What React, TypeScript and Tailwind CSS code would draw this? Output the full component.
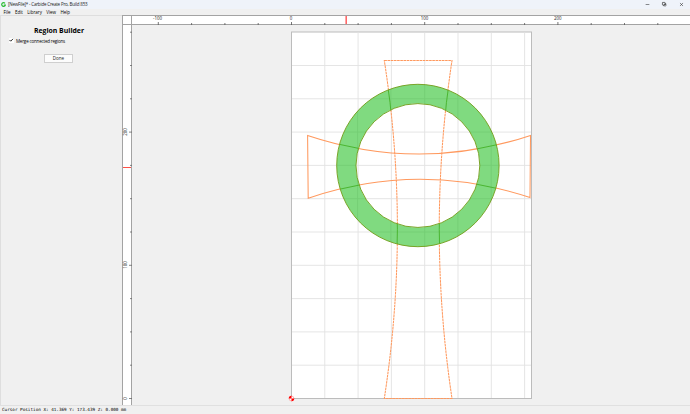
import { Check, Copy, Minus, X } from "lucide-react";

const GRID = 33.3;
const ORIGIN_X = 159.5;
const ORIGIN_Y = 373.5;

const UPRIGHT = "M252.3 35.5H320Q294.5 204 320 373.5H252.3Q278.5 204 252.3 35.5Z";
const CROSSBAR =
  "M175.6 110.4Q287 147.6 398.5 110.4L398 172.5Q287 135.8 176.2 173.2Z";
const RING =
  "M204.7 140.5a81.2 81.2 0 1 0 162.4 0a81.2 81.2 0 1 0 -162.4 0ZM224 140.5a61.9 61.9 0 1 0 123.8 0a61.9 61.9 0 1 0 -123.8 0Z";

const menus = ["File", "Edit", "Library", "View", "Help"];

function TitleBar() {
  return (
    <header className="flex h-[9px] shrink-0 items-center justify-between bg-[#eff3fa]">
      <div className="flex items-center pl-[1px]">
        <svg className="h-[5px] w-[5px]" viewBox="0 0 10 10">
          <path
            d="M8 2.6A3.7 3.7 0 1 0 8.7 6H5.6"
            fill="none"
            stroke="#2fbd38"
            strokeWidth="2.4"
          />
        </svg>
        <span className="ml-[2px] whitespace-pre text-[4.5px] leading-[9px] tracking-[-0.19px]">
          [NewFile]* - Carbide Create Pro, Build 853
        </span>
      </div>
      <div className="flex items-center gap-[12px] pr-[6.5px] text-[#222]">
        <Minus size={5} strokeWidth={2.5} />
        <Copy size={4.5} strokeWidth={3.5} className="-scale-x-100 rotate-90" />
        <X size={5} strokeWidth={2.5} />
      </div>
    </header>
  );
}

function MenuBar() {
  return (
    <nav className="flex h-[6px] shrink-0 items-center gap-[4.3px] pl-[3.5px] text-[4.5px] leading-[6px] text-black">
      {menus.map((menu) => (
        <span key={menu}>
          <span className="underline decoration-[0.4px] underline-offset-[0.5px]">
            {menu[0]}
          </span>
          {menu.slice(1)}
        </span>
      ))}
    </nav>
  );
}

function Sidebar() {
  return (
    <aside className="flex w-[122px] shrink-0 flex-col border-l border-t border-[#dedede]">
      <h1 className="mt-[9.5px] pr-[5px] text-center text-[6.9px] font-bold leading-[9px] text-black">
        Region Builder
      </h1>
      <label className="ml-[8px] mt-[3px] flex h-[6px] items-center">
        <span className="flex h-[5px] w-[5px] items-center justify-center bg-white">
          <Check size={4.5} strokeWidth={4.5} className="text-black" />
        </span>
        <span className="ml-[2px] whitespace-nowrap text-[4.5px] leading-[6px] tracking-[-0.18px] text-black">
          Merge connected regions
        </span>
      </label>
      <button className="ml-[43px] mt-[10px] h-[9px] w-[29px] border border-[#cfcfcf] bg-[#fcfcfc] text-center text-[4.5px] leading-[7px]">
        Done
      </button>
    </aside>
  );
}

function TopRuler() {
  return (
    <svg className="block h-[10px] w-[568px]" viewBox="0 0 568 10">
      <rect width="568" height="10" fill="#fff" />
      <path d="M0 .5H568M0 9.5H568M.5 0V10M9.5 0V10" stroke="#a3a3a3" />
      {Array.from({ length: 17 }, (_, i) => {
        const x = 169.5 + (i - 4) * GRID;
        return x > 10 && x < 568 ? (
          <path
            key={i}
            d={`M${x} ${i % 4 === 0 ? 7 : 8}V10`}
            stroke="#555"
            strokeWidth=".8"
          />
        ) : null;
      })}
      <g fontSize="4.4" textAnchor="middle" fill="#222">
        <text x="35.5" y="5.2">-100</text>
        <text x="169" y="5.2">0</text>
        <text x="302.5" y="5.2">100</text>
        <text x="435.7" y="5.2">200</text>
      </g>
      <path d="M224.2 1V9" stroke="#ff6868" strokeWidth="1.6" />
    </svg>
  );
}

function LeftRuler() {
  return (
    <svg className="block h-[380px] w-[10px] shrink-0" viewBox="0 0 10 380">
      <rect width="10" height="380" fill="#fff" />
      <path d="M.5 0V380M9.5 0V380" stroke="#a3a3a3" />
      {Array.from({ length: 12 }, (_, i) => (
        <path
          key={i}
          d={`M${i % 4 === 0 ? 7 : 8} ${ORIGIN_Y - i * GRID}H10`}
          stroke="#666"
          strokeWidth=".8"
        />
      ))}
      <g fontSize="4.4" textAnchor="middle" fill="#222">
        <text transform="translate(5.2 373.5) rotate(-90)">0</text>
        <text transform="translate(5.2 240) rotate(-90)">100</text>
        <text transform="translate(5.2 107) rotate(-90)">200</text>
      </g>
      <path d="M1 142.5H9" stroke="#ff5046" />
    </svg>
  );
}

function Canvas() {
  return (
    <svg className="block h-[380px] w-[558px]" viewBox="0 0 558 380">
      <clipPath id="ring">
        <path d={RING} clipRule="evenodd" />
      </clipPath>
      <rect
        x="159.5"
        y="7"
        width="240"
        height="366.5"
        fill="#fff"
        stroke="#bcbcbc"
      />
      <g stroke="#e2e2e2" strokeWidth=".9">
        {Array.from({ length: 7 }, (_, i) => {
          const x = ORIGIN_X + (i + 1) * GRID;
          return <path key={i} d={`M${x} 7.5V373`} />;
        })}
        {Array.from({ length: 10 }, (_, i) => {
          const y = ORIGIN_Y - (i + 1) * GRID;
          return <path key={i} d={`M160 ${y}H399`} />;
        })}
      </g>
      {/* stock cross, upright part is drawn dashed */}
      <g fill="none" stroke="#ff995e" strokeWidth="1.05">
        <path d={UPRIGHT} strokeDasharray="2.6 .6" />
        <path d={CROSSBAR} />
      </g>
      {/* the region hides the cross and shows its outline in green */}
      <path d={RING} fill="#80da80" fillRule="evenodd" />
      <g clipPath="url(#ring)" fill="none">
        <path
          d="M258.9 40V240M292.7 40V240M225.6 40V240M325.9 40V240M359.2 40V240M200 107.1H370M200 140.4H370M200 173.7H370M200 207H370M200 73.8H370"
          stroke="#74ce74"
          strokeWidth=".9"
        />
        <g stroke="#48b32c" strokeWidth=".95">
          <path d={UPRIGHT} />
          <path d={CROSSBAR} />
        </g>
      </g>
      <path d={RING} fill="none" stroke="#729c17" strokeWidth=".9" />
      <circle cx="159.5" cy="373.5" r="2.6" fill="#fff" />
      <path
        d="M159.5 373.5H156.8A2.7 2.7 0 0 1 159.5 370.8ZM159.5 373.5H162.2A2.7 2.7 0 0 1 159.5 376.2Z"
        fill="red"
      />
      <circle
        cx="159.5"
        cy="373.5"
        r="2.4"
        fill="none"
        stroke="red"
        strokeWidth=".3"
      />
    </svg>
  );
}

export default function App() {
  return (
    <div className="flex h-[414px] w-[690px] flex-col overflow-hidden bg-[#f0f0f0] font-['Open_Sans','Noto_Sans',sans-serif] text-[#222]">
      <TitleBar />
      <MenuBar />
      <main className="flex h-[390px] shrink-0">
        <Sidebar />
        <section className="flex w-[568px] flex-col">
          <TopRuler />
          <div className="flex">
            <LeftRuler />
            <Canvas />
          </div>
        </section>
      </main>
      <footer className="flex h-[9px] shrink-0 items-center whitespace-pre border-t border-[#e0e0e0] pl-[2px] font-['DejaVu_Sans_Mono',monospace] text-[4.3px] leading-[8px] text-black">
        Cursor Position X: 41.369 Y: 173.439 Z: 0.000 mm
      </footer>
    </div>
  );
}
